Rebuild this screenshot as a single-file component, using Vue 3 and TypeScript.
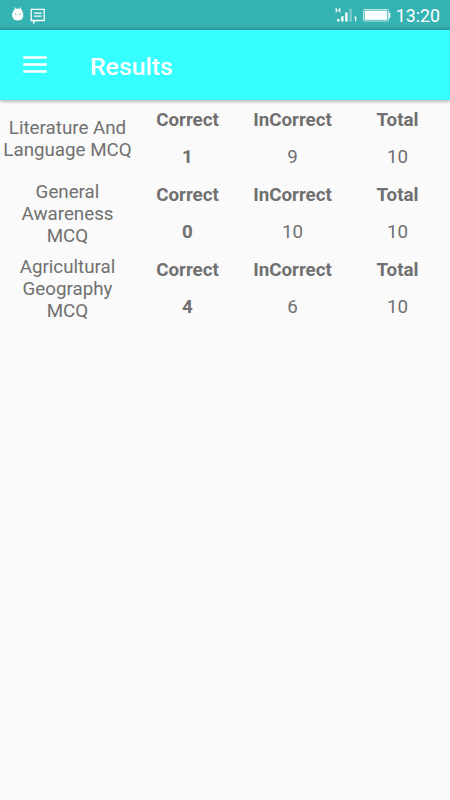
<script setup lang="ts">
interface Result {
  subject: string[]
  correct: number
  incorrect: number
  total: number
}

const results: Result[] = [
  { subject: ['Literature And', 'Language MCQ'], correct: 1, incorrect: 9, total: 10 },
  { subject: ['General', 'Awareness', 'MCQ'], correct: 0, incorrect: 10, total: 10 },
  { subject: ['Agricultural', 'Geography', 'MCQ'], correct: 4, incorrect: 6, total: 10 },
]
</script>

<template>
  <div class="screen">
    <div class="status">
      <svg class="droid" width="14" height="16" viewBox="0 0 14 16">
        <path d="M3.6 1.4L4.6 3.4M10 1.4L9 3.4" stroke="#fff" stroke-width="1" />
        <path d="M2 6.5C2 3.6 4 2.4 6.8 2.4S11.6 3.6 11.6 6.5L12.2 7V11L11.6 11.5C11.4 13.8 9.5 14.4 6.8 14.4S2.2 13.8 2 11.5L1.2 11V7Z" fill="#fff" />
        <path d="M3.8 8.1H5.4M8.2 8.1H9.8" stroke="#63c4c4" stroke-width="1.3" />
      </svg>
      <svg class="message" width="16" height="16" viewBox="0 0 16 16" fill="none" stroke="#fff" stroke-width="1.3">
        <path d="M1.2 1.3H14.2V12.5H5.3L3.8 14.4V12.5H1.2Z" />
        <path d="M4 5.2H11.7M4 8.2H11.7" />
      </svg>
      <div class="spacer"></div>
      <svg class="signal" width="24" height="16" viewBox="0 0 24 16">
        <path d="M1.2 0V4.6M4.8 0V4.6M1.2 2.3H4.8" stroke="#fff" stroke-width="1.1" fill="none" />
        <path d="M2.2 11H4.5V13.5H2.2ZM6.2 8.2H8.5V13.5H6.2ZM10.2 4.5H12.6V13.5H10.2Z" fill="#fff" />
        <path d="M14.4 .5H16.8V13.5H14.4Z" fill="#fff" opacity=".35" />
        <path d="M19.4 9.8L20.7 9V13.3" stroke="#fff" stroke-width="1.2" fill="none" />
      </svg>
      <svg class="battery" width="28" height="13" viewBox="0 0 28 13">
        <rect x=".5" y=".5" width="25" height="11.5" rx="1" fill="none" stroke="#fff" stroke-opacity=".7" />
        <rect x="1.7" y="1.7" width="22.6" height="9.1" fill="#fff" />
        <path d="M26 3.8H27.3V9H26Z" fill="#fff" />
      </svg>
      <span class="time">13:20</span>
    </div>
    <header class="bar">
      <svg class="menu" width="24" height="18" viewBox="0 0 24 18">
        <path d="M.3 1.5H23.8M.3 8.5H23.8M.3 15.5H23.8" stroke="#fff" stroke-width="2.6" />
      </svg>
      <h1>Results</h1>
    </header>
    <main>
      <section v-for="(r, i) in results" :key="i" class="row">
        <div class="subject">
          <span v-for="line in r.subject" :key="line">{{ line }}</span>
        </div>
        <div class="cell"><b>Correct</b><b>{{ r.correct }}</b></div>
        <div class="cell"><b>InCorrect</b><span>{{ r.incorrect }}</span></div>
        <div class="cell"><b>Total</b><span>{{ r.total }}</span></div>
      </section>
    </main>
  </div>
</template>

<style>
body {
  margin: 0;
  background: #fafafa;
}
</style>

<style scoped>
.screen {
  width: 450px;
  height: 800px;
  overflow: hidden;
  background: #fafafa;
  color: #707070;
  font-family: Roboto, sans-serif;
}
.status {
  box-sizing: border-box;
  height: 30px;
  display: flex;
  align-items: flex-start;
  padding: 0 10px 0 11px;
  background: linear-gradient(#35b2b2 0 26px, #319f9f 29px, #2c9090 30px);
}
.droid {
  margin-top: 6px;
}
.message {
  margin: 8px 0 0 5px;
}
.spacer {
  flex: 1;
}
.signal {
  margin-top: 8px;
}
.battery {
  margin: 9px 5px 0 4px;
}
.time {
  color: #fff;
  font-size: 17.8px;
  line-height: 31px;
}
.bar {
  box-sizing: border-box;
  height: 70px;
  display: flex;
  align-items: center;
  padding-left: 23px;
  background: #35ffff;
  box-shadow: 0 1px 4px rgba(0, 0, 0, 0.36);
  clip-path: inset(0 0 -8px);
}
.menu {
  margin-right: 43px;
}
h1 {
  margin: 3px 0 0;
  color: #fff;
  font-size: 24.8px;
  font-weight: 500;
  line-height: 30px;
}
main {
  padding-top: 1px;
}
.row {
  height: 75px;
  display: grid;
  grid-template-columns: 135px repeat(3, 105px);
  font-size: 18.75px;
  line-height: 22px;
  text-align: center;
}
.subject {
  display: flex;
  flex-direction: column;
  justify-content: center;
}
.cell {
  display: grid;
  grid-template-rows: 37.5px 37.5px;
  align-items: center;
}
b {
  font-weight: 700;
}
</style>
